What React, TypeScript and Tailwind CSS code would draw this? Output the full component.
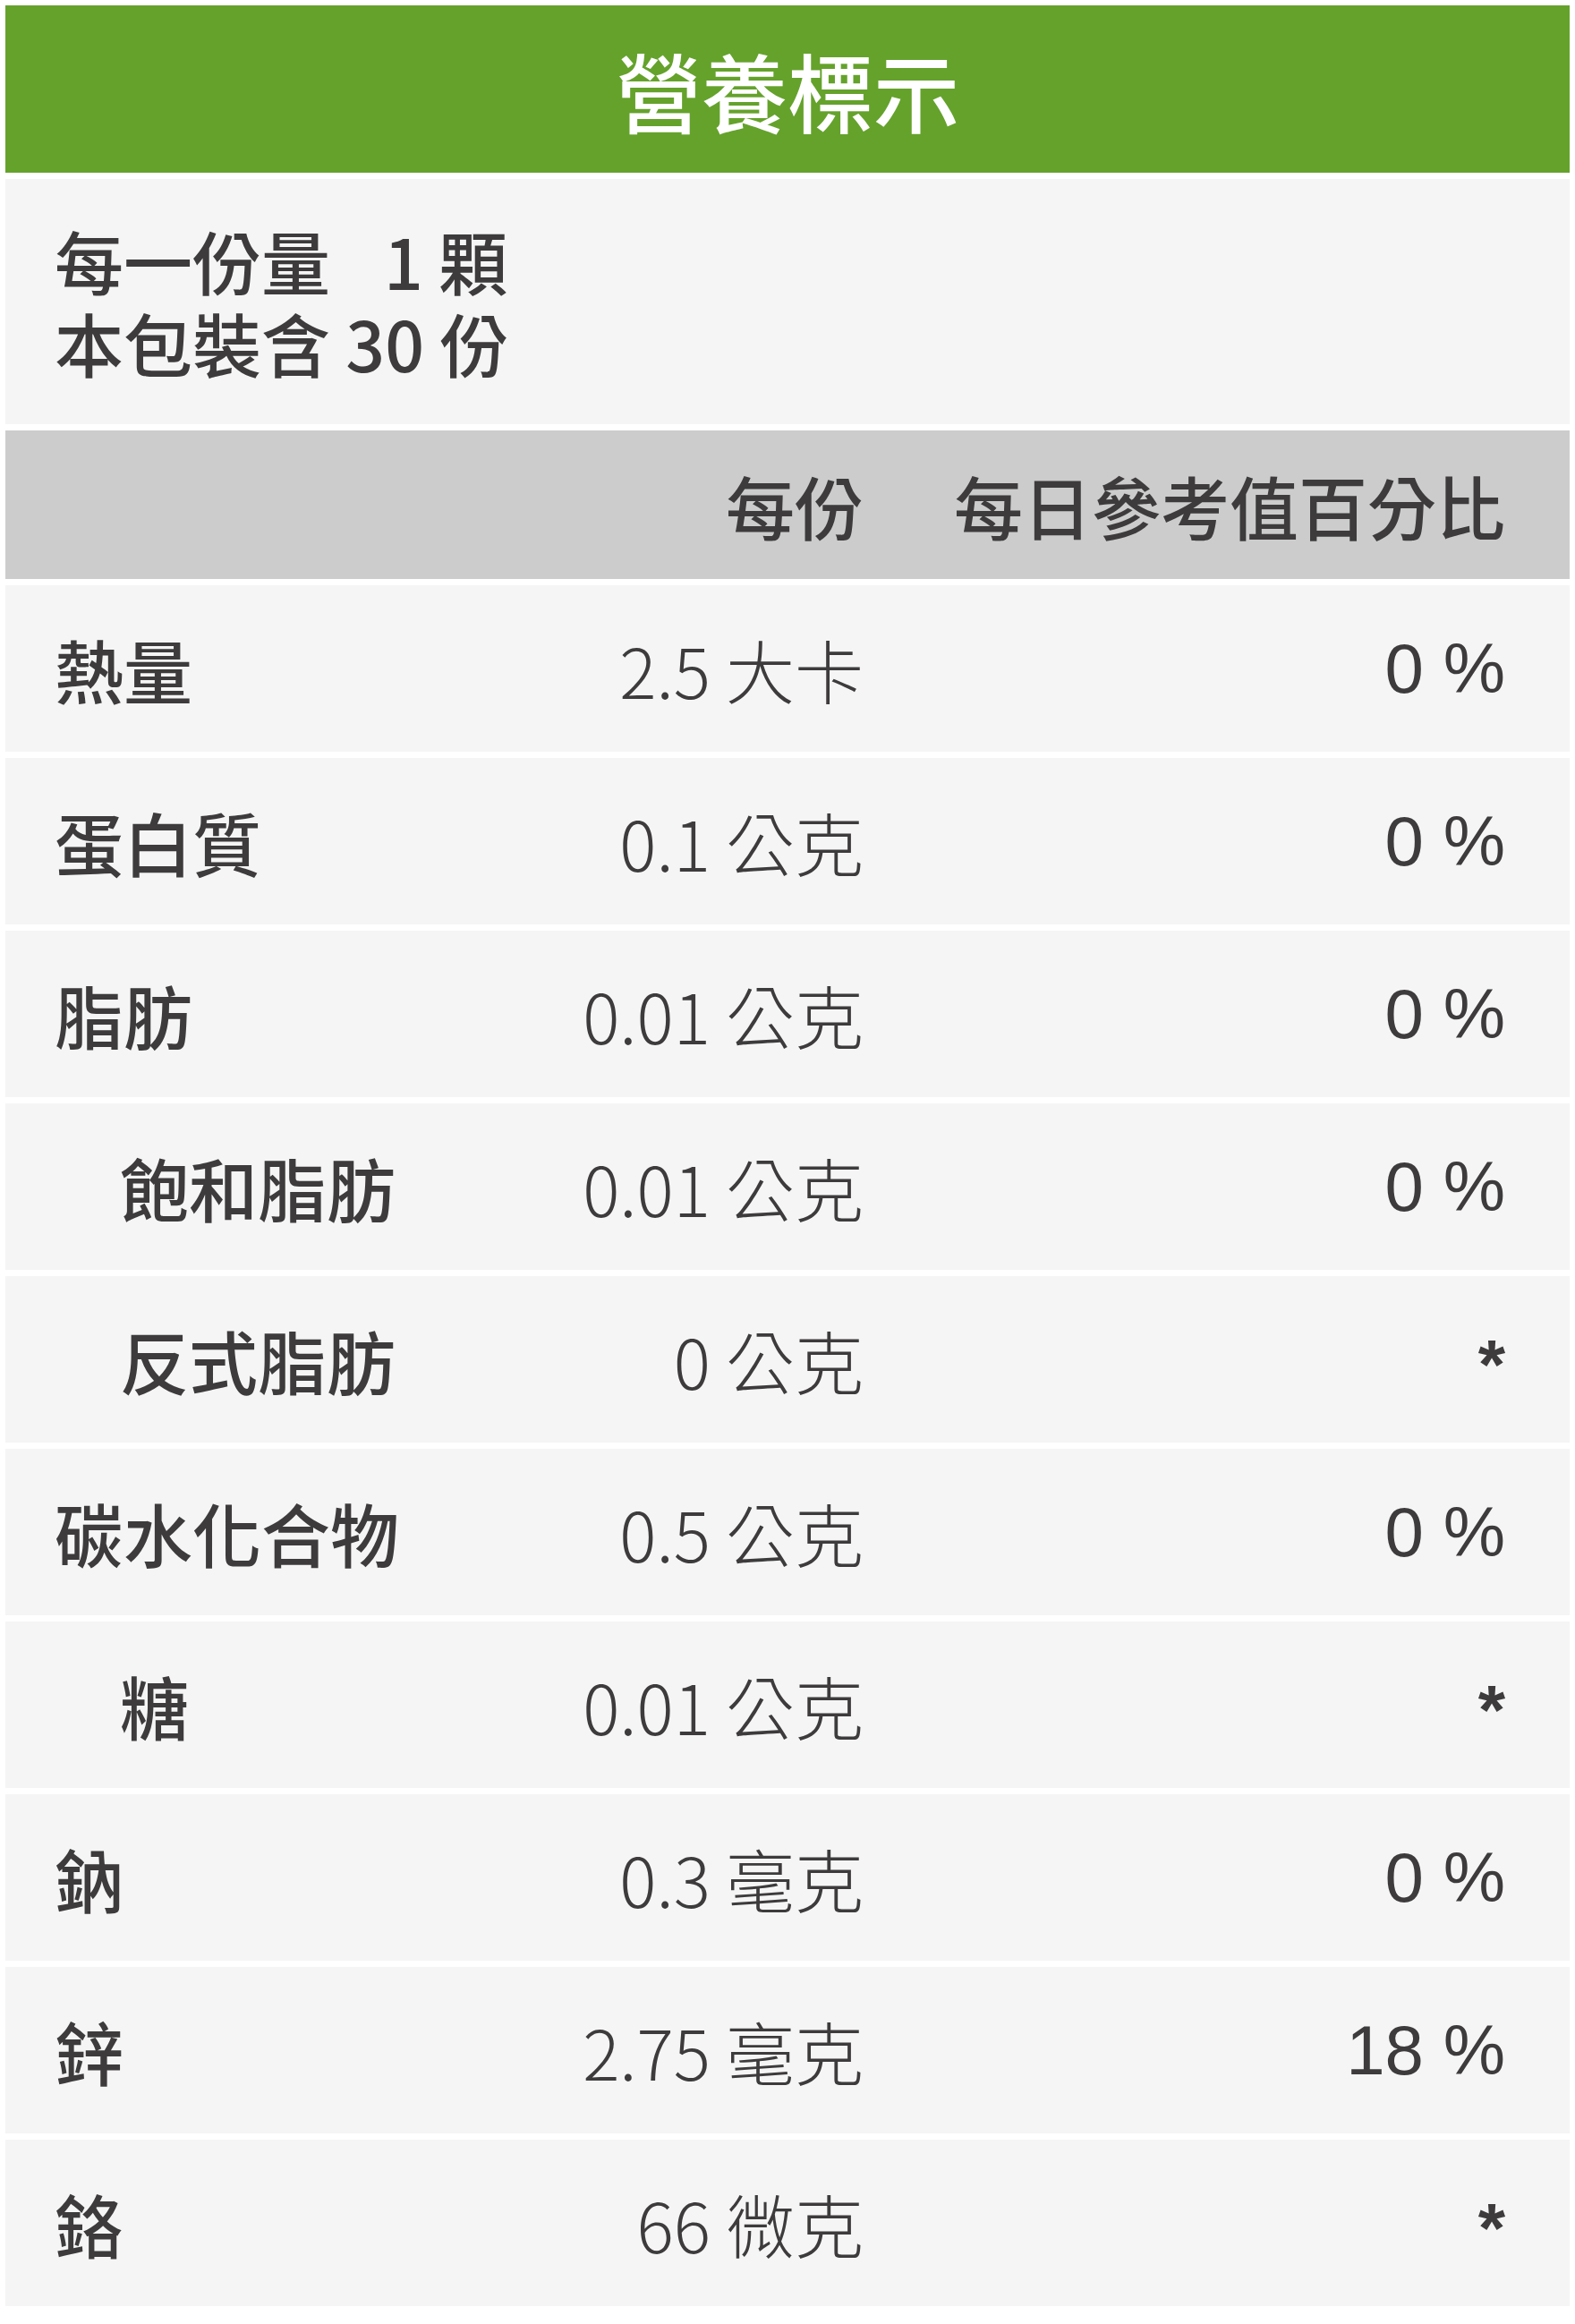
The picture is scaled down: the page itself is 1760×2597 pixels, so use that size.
type Row = {
  label: string
  amount: string
  daily: string
  indent?: boolean
}

const rows: Row[] = [
  { label: "熱量", amount: "2.5 大卡", daily: "0 %" },
  { label: "蛋白質", amount: "0.1 公克", daily: "0 %" },
  { label: "脂肪", amount: "0.01 公克", daily: "0 %" },
  { label: "飽和脂肪", amount: "0.01 公克", daily: "0 %", indent: true },
  { label: "反式脂肪", amount: "0 公克", daily: "*", indent: true },
  { label: "碳水化合物", amount: "0.5 公克", daily: "0 %" },
  { label: "糖", amount: "0.01 公克", daily: "*", indent: true },
  { label: "鈉", amount: "0.3 毫克", daily: "0 %" },
  { label: "鋅", amount: "2.75 毫克", daily: "18 %" },
  { label: "鉻", amount: "66 微克", daily: "*" },
]

export default function App() {
  return (
    <div className="min-h-[2597px] w-full bg-white px-[6px] pt-[6px] font-['Noto_Sans_CJK_TC','Noto_Sans_CJK_SC',sans-serif] text-[#3d3b3b]">
      <div className="flex flex-col gap-[7px]">
        {/* title bar */}
        <div className="flex h-[187px] items-center justify-center bg-[#65a22c]">
          <h1 className="text-[96px] font-medium leading-none text-white">營養標示</h1>
        </div>

        {/* serving info */}
        <div className="flex h-[274px] flex-col justify-center bg-[#f5f5f5] pl-[55px] text-[77px] font-medium leading-[92px]">
          <div>
            每一份量<span className="ml-[60px]">1 顆</span>
          </div>
          <div>本包裝含 30 份</div>
        </div>

        {/* column header */}
        <div className="flex h-[166px] items-center bg-[#cccccc] pl-[55px] pr-[72px] text-[77px] font-medium leading-none">
          <div className="flex-1" />
          <div className="w-[400px] text-right">每份</div>
          <div className="w-[717px] text-right">每日參考值百分比</div>
        </div>

        {/* nutrient rows */}
        {rows.map((row) => (
          <div
            key={row.label}
            className="flex h-[186px] items-center bg-[#f5f5f5] pl-[55px] pr-[72px] text-[77px] leading-none"
          >
            <div className={`flex-1 font-medium ${row.indent ? "pl-[73px]" : ""}`}>{row.label}</div>
            <div className="w-[400px] text-right font-light">{row.amount}</div>
            {row.daily === "*" ? (
              <div className="w-[717px] pt-[12px] text-right font-['Liberation_Sans',Arial,sans-serif] text-[78px] font-bold">
                *
              </div>
            ) : (
              <div className="w-[717px] text-right font-['Liberation_Sans',Arial,sans-serif] text-[78px]">
                {row.daily}
              </div>
            )}
          </div>
        ))}
      </div>
    </div>
  )
}
